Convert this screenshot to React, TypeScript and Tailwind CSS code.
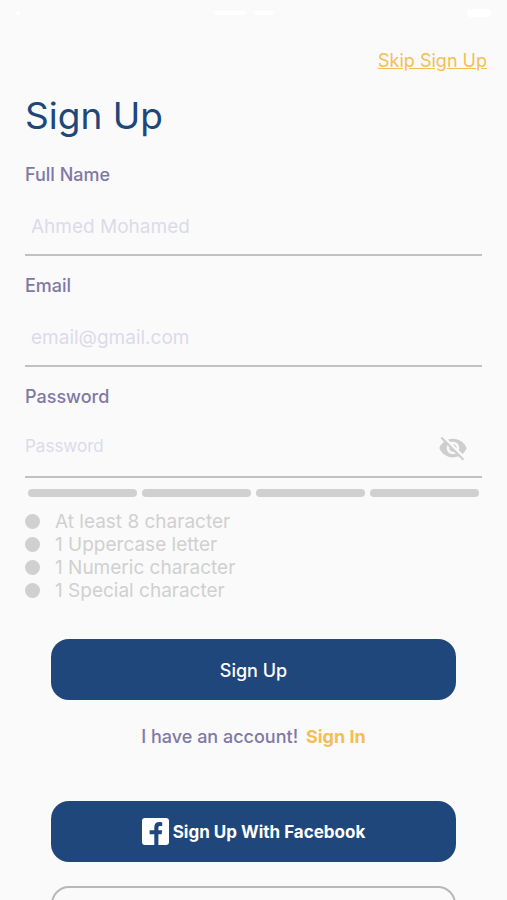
import { MdVisibilityOff } from 'react-icons/md'

const rules = [
  'At least 8 character',
  '1 Uppercase letter',
  '1 Numeric character',
  '1 Special character',
]

function StatusBar() {
  return (
    <div className="flex items-center justify-between h-[26px] px-4" aria-hidden="true">
      <div className="w-1 h-1 rounded-full bg-white" />
      <div className="flex items-center gap-2">
        <div className="w-8 h-1 rounded-full bg-white" />
        <div className="w-5 h-1 rounded-full bg-white" />
      </div>
      <div className="w-6 h-2 rounded-sm bg-white" />
    </div>
  )
}

function FacebookIcon() {
  return (
    <svg width="27" height="27" viewBox="0 0 27 27" fill="currentColor" aria-hidden="true">
      <path d="M3 0H24A3 3 0 0 1 27 3V24A3 3 0 0 1 24 27H16.4V16.2H19.6L20.2 12.2H16.4V9.8C16.4 8.6 17 8 18.3 8H20.2V4.4C19.3 4.2 18.4 4.1 17.4 4.1C14.2 4.1 12.3 6 12.3 9.3V12.2H7.6V16.2H12.3V27H3A3 3 0 0 1 0 24V3A3 3 0 0 1 3 0Z" />
    </svg>
  )
}

type FieldProps = {
  id: string
  label: string
  type: string
  placeholder: string
}

function Field({ id, label, type, placeholder }: FieldProps) {
  return (
    <div className="flex flex-col gap-[10px]">
      <label htmlFor={id} className="text-[18px] leading-[26px] font-medium text-[#7f78a7]">
        {label}
      </label>
      <input
        id={id}
        type={type}
        placeholder={placeholder}
        className="w-full h-[58px] px-[6px] border-b-2 border-[#c1c1c1] text-[19px] text-[#7f78a7] placeholder:text-[#dcdaea] outline-none"
      />
    </div>
  )
}

function PasswordField() {
  return (
    <div className="flex flex-col gap-[10px]">
      <label htmlFor="password" className="text-[18px] leading-[26px] font-medium text-[#7f78a7]">
        Password
      </label>
      <div className="flex items-center h-[58px] pr-[14px] border-b-2 border-[#c1c1c1]">
        <input
          id="password"
          type="password"
          placeholder="Password"
          className="flex-1 min-w-0 h-full pb-1 text-[17px] text-[#7f78a7] placeholder:text-[#dcdaea] outline-none"
        />
        <button type="button" aria-label="Show password" className="text-[#cecece]">
          <MdVisibilityOff size={30} />
        </button>
      </div>
    </div>
  )
}

export default function App() {
  return (
    <div className="h-screen overflow-y-auto [scrollbar-width:none] bg-[#fafafa] font-['Inter',sans-serif]">
      <StatusBar />

      <div className="flex justify-end px-5 pt-[22px]">
        <a href="#skip" className="text-[18px] leading-[26px] text-[#f5bd55] underline">
          Skip Sign Up
        </a>
      </div>

      <form className="px-[25px] pb-6">
        <h1 className="pt-[18px] text-[37px] leading-12 text-[#20477b]">Sign Up</h1>

        {/* Fields */}
        <div className="flex flex-col gap-[17px] pt-[22px]">
          <Field id="name" label="Full Name" type="text" placeholder="Ahmed Mohamed" />
          <Field id="email" label="Email" type="email" placeholder="email@gmail.com" />
          <PasswordField />
        </div>

        {/* Password strength */}
        <div className="flex gap-[5px] px-[3px] pt-[11px]">
          {[...Array(4)].map((_, i) => (
            <div key={i} className="flex-1 h-2 rounded-full bg-[#d0d0d0]" />
          ))}
        </div>
        <ul className="pt-[13px]">
          {rules.map((rule) => (
            <li key={rule} className="flex items-center gap-[15px] text-[19px] leading-[23px] text-[#d0d0d0]">
              <span className="w-[15px] h-[15px] rounded-full bg-[#d0d0d0]" />
              {rule}
            </li>
          ))}
        </ul>

        {/* Actions */}
        <div className="flex flex-col px-[26px] pt-[37px]">
          <button type="submit" className="h-[61px] rounded-[18px] bg-[#20477b] pt-px text-[18px] font-medium text-white">
            Sign Up
          </button>
          <p className="pt-6 text-center text-[18px] leading-[26px] font-medium text-[#7f78a7]">
            I have an account!{' '}
            <a href="#sign-in" className="ml-[3px] font-bold text-[#f5bd55]">
              Sign In
            </a>
          </p>
          <button
            type="button"
            className="flex items-center justify-center gap-1 h-[61px] mt-[51px] rounded-[18px] bg-[#20477b] text-[17px] leading-[26px] font-bold text-white"
          >
            <FacebookIcon />
            Sign Up With Facebook
          </button>
          <button type="button" aria-label="Other sign up" className="h-[61px] mt-6 rounded-[18px] border-2 border-[#b8b8b8]" />
        </div>
      </form>
    </div>
  )
}
